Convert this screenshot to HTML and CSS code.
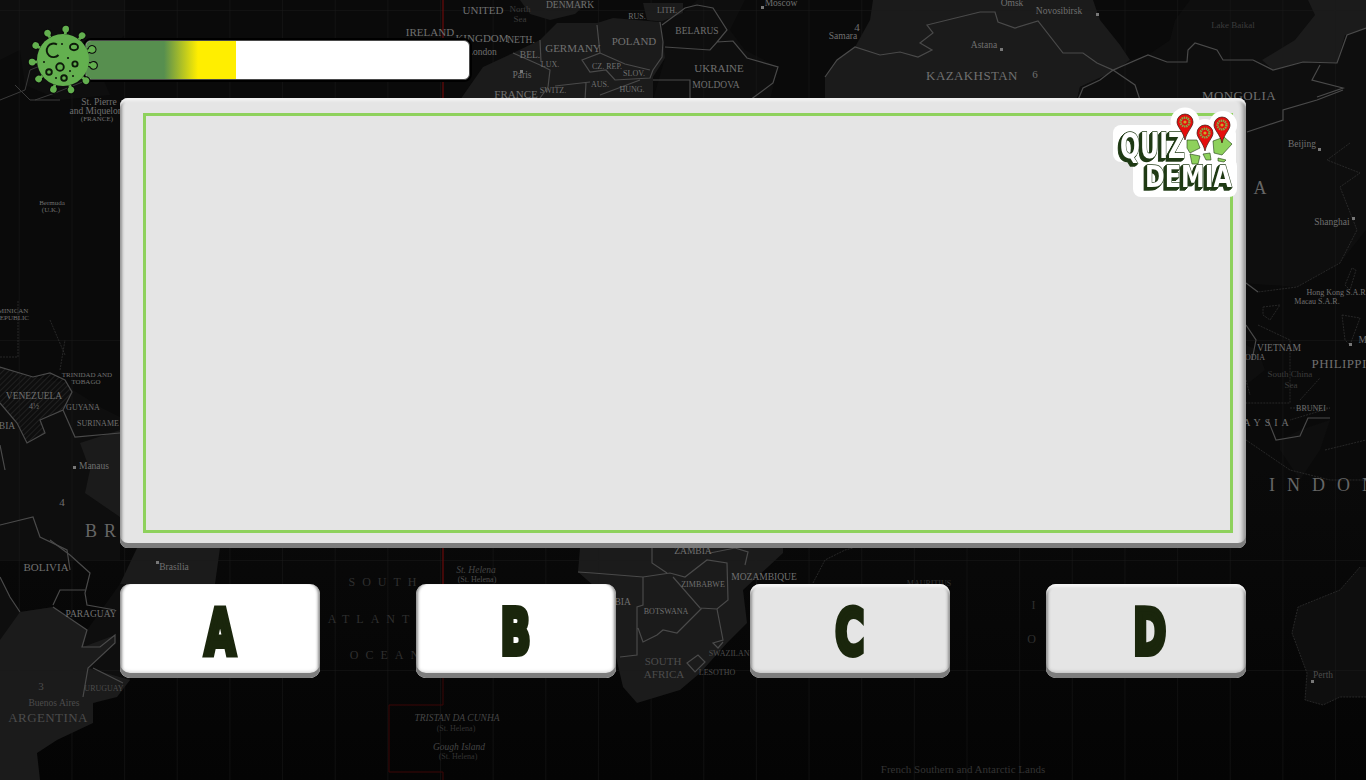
FILE: index.html
```html
<!DOCTYPE html>
<html lang="en">
<head>
    <meta charset="utf-8">
    <meta name="viewport" content="width=device-width, initial-scale=1.0">
    <title>Quizdemia</title>
    <link rel="stylesheet" href="styles.css">
</head>

<body>
    <!-- world map behind the game -->
    <svg class="map" viewBox="0 0 1366 780" aria-hidden="true">
        <defs>
            <pattern id="grid" x="18.8" y="10" width="52.65" height="110" patternUnits="userSpaceOnUse">
                <path class="gridline" d="M0 0V110M0 0H52.65"/>
            </pattern>
            <pattern id="hatch" width="4" height="4" patternUnits="userSpaceOnUse" patternTransform="rotate(45)">
                <path class="hatchline" d="M0 0V4"/>
            </pattern>
        </defs>

        <!-- land -->
        <path class="land" d="M460 100L483 67 513 53 540 40 557 23 597 23 613 18 660 22 665 47 665 58 653 77 653 100Z"/>
        <path class="land" d="M643 3H683V13L673 23 647 20Z"/>
        <path class="land" d="M520 0H590L575 14 550 20 530 14Z"/>
        <path class="land-dark" d="M660 22L683 13 697 0H745L730 30 745 50 778 67 770 100H653L665 58Z"/>
        <path class="land" d="M825 77L837 60 855 47 870 20 873 0H1093L1100 20 1120 45 1130 60 1117 70 1080 87 1077 100H825Z"/>
        <path class="land-dark" d="M1077 100L1080 87 1117 70 1130 60 1148 55 1170 40 1175 20 1190 0H1366V230L1340 263 1297 287 1240 283V100Z"/>
        <path class="land" d="M1262 60L1295 40 1315 15 1308 0H1366V28L1345 35 1337 63 1303 62 1273 70Z"/>
        <path class="land-dark" d="M0 0H125V35L95 60 110 95 60 100 25 85 20 50 0 60Z"/>
        <path class="land-dark" d="M0 367L33 377 67 383 73 390 100 407 120 417V560H0Z"/>
        <path class="land" d="M80 443L120 430V517L85 493 90 470Z"/>
        <path class="land-dark" d="M0 577L10 597 20 612 53 607 87 630 120 584H132L130 680 100 700 60 720 0 650Z"/>
        <path class="land" d="M0 640L20 612 53 607 87 630 83 647 115 635 115 643 88 668 130 680 117 697 93 703 93 723 57 740 37 753 40 780H0Z"/>
        <path class="land" d="M137 548H220L215 584H120Z"/>
        <path class="land" d="M580 548L578 572 610 600 616 620 616 657 623 687 637 703 680 690 700 673 727 643 747 623 743 590 783 553V548Z"/>
        <path class="land-dark" d="M1360 567L1340 590 1298 607 1292 633 1307 673 1305 700 1323 705 1340 697H1366V567Z"/>
        <path class="land-dark" d="M1246 345L1258 350 1265 370 1246 385ZM1280 440L1300 430 1330 420 1320 450 1300 480 1280 450Z"/>
        <path fill="url(#hatch)" d="M0 367L33 377 50 373 65 380 72 392 63 410 40 420 45 433 27 443 17 423 0 403Z"/>

        <rect width="1366" height="780" fill="url(#grid)"/>

        <!-- time zone line -->
        <path class="zone" d="M443 0V100M443 545V600"/>
        <path class="zone-dim" d="M443 600V705H389V772H443V780"/>

        <!-- borders -->
        <path class="border" d="M513 53L540 65 550 70 548 87 540 98M540 40L541 62M597 25L600 53 582 60 590 72 606 70 615 80 650 78 653 70M600 53L625 64 650 70M660 22L663 42 662 57 653 70M665 47L710 50 717 42 733 41 747 58 778 67 773 83 750 100M662 25L685 8 697 5 713 8 727 30 717 42M653 80L690 80 690 100M586 83L585 100M555 86L590 82M600 95L640 80"/>
        <path class="border" d="M825 77L837 60 855 47 880 55 900 52 918 57 932 50 920 43 933 33 927 25 980 12 995 12 998 22 1015 28 1038 21 1063 53 1083 53 1097 63 1113 70 1148 55 1167 62 1187 62 1188 50 1195 43 1217 50 1223 60 1253 60 1273 70 1303 62 1337 63 1347 35 1366 28M1113 70L1100 80 1083 88 1078 100M1113 70L1135 85 1140 100M1320 65L1312 80 1343 88 1317 97"/>
        <path class="border" d="M1247 132L1283 120 1283 110 1317 100 1343 90M1246 283L1258 292M1246 325L1256 340 1252 360M1268 420L1276 440 1300 436 1308 418 1330 418"/>
        <path class="border" d="M578 572L593 573 643 577 670 573 685 577 707 560 727 563 728 600 717 609 700 608 673 577M643 577V605L637 607V655L620 657M638 628L643 642 657 635 663 630 677 633 702 608M717 609L723 640 713 643 718 648 723 642M687 663L698 655 705 662 695 672ZM652 548V563L667 573M710 553L735 548 748 552 745 565"/>
        <path class="border" d="M50 540L70 555 90 573 85 593 87 605 115 610M53 605L60 590 85 590M20 612L10 597 0 577M53 607L87 630 82 647 100 647 115 635 115 643 88 668 83 697M93 668L123 683"/>
        <path class="border" d="M0 367L33 377 50 373 65 380 72 392 63 410 40 420 45 433 27 443 17 423 0 403M72 392L63 410 75 437 120 433M0 525L33 517 40 537 67 550 70 570M0 445L5 470"/>
        <path class="border-thin" d="M0 100L25 90 30 70 55 60 100 75M15 85L30 100 60 100M35 100L55 93 100 75"/>

        <!-- thin coast lines -->
        <path class="coast" d="M1350 143L1327 160 1360 173 1340 187 1357 230 1340 263 1297 287 1258 292M1352 268L1345 285 1350 290 1356 270ZM1263 307L1280 305 1270 320 1263 315ZM1258 325L1290 340 1290 403H1246M1342 315L1360 318 1350 345 1345 340ZM1300 400L1320 378M1246 440L1290 470 1330 480 1366 480M1290 408L1330 408 1290 420M1325 450L1366 440M1246 380L1250 395"/>
        <path class="coast" d="M1360 567L1340 590 1298 607 1292 633 1307 673 1305 700 1323 705 1340 697H1366M813 583L825 560 845 550 853 548M0 357H18V300M50 320L65 355M60 370L65 340"/>

        <!-- labels -->
        <text class="lbl" x="483" y="14">UNITED</text>
        <text class="lbl" x="430" y="36">IRELAND</text>
        <text class="lbl" x="482" y="42">KINGDOM</text>
        <text class="lbl-sm" x="482" y="55">London</text>
        <text class="lbl-dim" x="520" y="12">North</text>
        <text class="lbl-dim" x="520" y="14" dy="8">Sea</text>
        <text class="lbl-sm" x="570" y="8">DENMARK</text>
        <text class="lbl-sm" x="521" y="43">NETH.</text>
        <text class="lbl-sm" x="530" y="58">BEL.</text>
        <text class="lbl-xs" x="550" y="67">LUX.</text>
        <text class="lbl-sm" x="522" y="78">Paris</text>
        <text class="lbl" x="516" y="98">FRANCE</text>
        <text class="lbl" x="573" y="52">GERMANY</text>
        <text class="lbl" x="634" y="45">POLAND</text>
        <text class="lbl-xs" x="607" y="69">CZ. REP.</text>
        <text class="lbl-xs" x="634" y="76">SLOV.</text>
        <text class="lbl-xs" x="600" y="87">AUS.</text>
        <text class="lbl-xs" x="632" y="92">HUNG.</text>
        <text class="lbl-xs" x="553" y="93">SWITZ.</text>
        <text class="lbl-xs" x="637" y="19">RUS.</text>
        <text class="lbl-xs" x="667" y="13">LITH.</text>
        <text class="lbl-sm" x="697" y="34">BELARUS</text>
        <text class="lbl" x="719" y="72">UKRAINE</text>
        <text class="lbl-sm" x="716" y="88">MOLDOVA</text>
        <text class="lbl-sm" x="781" y="6">Moscow</text>
        <text class="lbl-sm" x="843" y="39">Samara</text>
        <text class="lbl" x="857" y="31">4</text>
        <text class="lbl-sm" x="1012" y="6">Omsk</text>
        <text class="lbl-sm" x="1059" y="14">Novosibirsk</text>
        <text class="lbl-sm" x="984" y="48">Astana</text>
        <text class="lbl-big" x="972" y="80">KAZAKHSTAN</text>
        <text class="lbl" x="1035" y="78">6</text>
        <text class="lbl-dim" x="1233" y="28">Lake Baikal</text>
        <text class="lbl-big" x="1239" y="100">MONGOLIA</text>
        <text class="lbl-sm" x="1302" y="147">Beijing</text>
        <text class="lbl-huge" x="1260" y="194">A</text>
        <text class="lbl-sm" x="1332" y="225">Shanghai</text>
        <text class="lbl-xs" x="1337" y="295">Hong Kong S.A.R.</text>
        <text class="lbl-xs" x="1317" y="304">Macau S.A.R.</text>
        <text class="lbl-sm" x="1279" y="351">VIETNAM</text>
        <text class="lbl-xs" x="1255" y="360">ODIA</text>
        <text class="lbl-big" x="1352" y="368">PHILIPPINES</text>
        <text class="lbl-sm" x="1372" y="343">Manila</text>
        <text class="lbl-dim" x="1290" y="377">South China</text>
        <text class="lbl-dim" x="1291" y="388">Sea</text>
        <text class="lbl-xs" x="1311" y="411">BRUNEI</text>
        <text class="lbl-spaced" x="1268" y="426">AYSIA</text>
        <text class="lbl-huge lbl-wide" x="1372" y="491">INDONESIA</text>
        <text class="lbl-sm" x="99" y="105">St. Pierre</text>
        <text class="lbl-sm" x="96" y="114">and Miquelon</text>
        <text class="lbl-xxs" x="97" y="121">(FRANCE)</text>
        <text class="lbl-xxs" x="52" y="205">Bermuda</text>
        <text class="lbl-xxs" x="51" y="212">(U.K.)</text>
        <text class="lbl-xxs" x="8" y="313">DOMINICAN</text>
        <text class="lbl-xxs" x="12" y="320">REPUBLIC</text>
        <text class="lbl-xxs" x="87" y="377">TRINIDAD AND</text>
        <text class="lbl-xxs" x="86" y="384">TOBAGO</text>
        <text class="lbl-sm" x="34" y="399">VENEZUELA</text>
        <text class="lbl-xs" x="34" y="409">4½</text>
        <text class="lbl-xs" x="83" y="410">GUYANA</text>
        <text class="lbl-xs" x="98" y="426">SURINAME</text>
        <text class="lbl-sm" x="7" y="429">BIA</text>
        <text class="lbl-sm" x="94" y="469">Manaus</text>
        <text class="lbl" x="62" y="506">4</text>
        <text class="lbl-huge lbl-wide-sm" x="104" y="537">BR</text>
        <text class="lbl" x="46" y="571">BOLIVIA</text>
        <text class="lbl-sm" x="91" y="617">PARAGUAY</text>
        <text class="lbl-xs lbl-faint" x="104" y="691">URUGUAY</text>
        <text class="lbl lbl-faint" x="41" y="690">3</text>
        <text class="lbl-sm lbl-faint" x="54" y="706">Buenos Aires</text>
        <text class="lbl-big lbl-faint" x="48" y="722">ARGENTINA</text>
        <text class="lbl-sm" x="174" y="570">Brasília</text>
        <text class="lbl-ocean" x="386" y="586">SOUTH</text>
        <text class="lbl-ocean" x="385" y="623">ATLANTIC</text>
        <text class="lbl-ocean" x="388" y="659">OCEAN</text>
        <text class="lbl-note" x="476" y="573">St. Helena</text>
        <text class="lbl-xs lbl-faint" x="477" y="582">(St. Helena)</text>
        <text class="lbl-note" x="457" y="721">TRISTAN DA CUNHA</text>
        <text class="lbl-xs lbl-dark" x="456" y="731">(St. Helena)</text>
        <text class="lbl-note" x="459" y="750">Gough Island</text>
        <text class="lbl-xs lbl-dark" x="458" y="759">(St. Helena)</text>
        <text class="lbl-sm" x="693" y="554">ZAMBIA</text>
        <text class="lbl-sm" x="764" y="580">MOZAMBIQUE</text>
        <text class="lbl-xs" x="703" y="587">ZIMBABWE</text>
        <text class="lbl-xs" x="666" y="614">BOTSWANA</text>
        <text class="lbl-sm" x="610" y="605">NAMIBIA</text>
        <text class="lbl lbl-faint" x="663" y="665">SOUTH</text>
        <text class="lbl lbl-faint" x="664" y="678">AFRICA</text>
        <text class="lbl-xs lbl-faint" x="732" y="656">SWAZILAND</text>
        <text class="lbl-xs lbl-faint" x="717" y="675">LESOTHO</text>
        <text class="lbl-xs lbl-dark" x="929" y="586">MAURITIUS</text>
        <text class="lbl-ocean" x="1037" y="609">I</text>
        <text class="lbl-ocean" x="1035" y="643">O</text>
        <text class="lbl-sm lbl-faint" x="1323" y="678">Perth</text>
        <text class="lbl lbl-dark" x="963" y="773">French Southern and Antarctic Lands</text>

        <!-- city dots -->
        <path class="dot" d="M520 70h3v3h-3zM761 6h3v3h-3zM1096 13h3v3h-3zM1000 48h3v3h-3zM1318 148h3v3h-3zM1352 217h3v3h-3zM1349 343h3v3h-3zM73 466h3v3h-3zM156 561h3v3h-3zM1311 680h3v3h-3z"/>
    </svg>

    <header class="hud">
        <svg class="virus" viewBox="0 0 76 76" role="img" aria-label="Virus">
            <defs>
                <g id="spike">
                    <path d="M38 12V8"/>
                    <circle cx="38" cy="7" r="1.9"/>
                </g>
            </defs>
            <g class="spikes-out">
                <use href="#spike" transform="rotate(5 38 38)"/>
                <use href="#spike" transform="rotate(38 38 38)"/>
                <use href="#spike" transform="rotate(70 38 38)"/>
                <use href="#spike" transform="rotate(100 38 38)"/>
                <use href="#spike" transform="rotate(132 38 38)"/>
                <use href="#spike" transform="rotate(165 38 38)"/>
                <use href="#spike" transform="rotate(198 38 38)"/>
                <use href="#spike" transform="rotate(232 38 38)"/>
                <use href="#spike" transform="rotate(266 38 38)"/>
                <use href="#spike" transform="rotate(298 38 38)"/>
                <use href="#spike" transform="rotate(330 38 38)"/>
            </g>
            <g class="spikes">
                <use href="#spike" transform="rotate(5 38 38)"/>
                <use href="#spike" transform="rotate(38 38 38)"/>
                <use href="#spike" transform="rotate(70 38 38)"/>
                <use href="#spike" transform="rotate(100 38 38)"/>
                <use href="#spike" transform="rotate(132 38 38)"/>
                <use href="#spike" transform="rotate(165 38 38)"/>
                <use href="#spike" transform="rotate(198 38 38)"/>
                <use href="#spike" transform="rotate(232 38 38)"/>
                <use href="#spike" transform="rotate(266 38 38)"/>
                <use href="#spike" transform="rotate(298 38 38)"/>
                <use href="#spike" transform="rotate(330 38 38)"/>
            </g>
            <circle class="virus-body" cx="38" cy="38" r="26"/>
            <g class="virus-holes">
                <path d="M32 22.5A6.8 6.8 0 1 0 33.5 33"/>
                <ellipse cx="49" cy="25" rx="4" ry="3.2"/>
                <circle cx="35" cy="45" r="3.8"/>
                <circle cx="50" cy="42" r="2.6"/>
                <circle cx="24" cy="50" r="2.8"/>
                <circle cx="39" cy="56" r="2.8"/>
            </g>
            <g class="virus-dots">
                <circle cx="43" cy="36" r="1.1"/>
                <circle cx="37" cy="22" r="1"/>
                <circle cx="19" cy="40" r="1"/>
                <circle cx="31" cy="56" r="1"/>
                <circle cx="48" cy="54" r="1"/>
                <circle cx="45" cy="49" r="1"/>
            </g>
        </svg>
        <div class="bar">
            <div class="bar-fill"></div>
        </div>
    </header>

    <main class="game">
        <section class="panel">
            <div class="question"></div>
            <svg class="logo" viewBox="0 0 135 96" role="img" aria-label="Quizdemia">
                <defs>
                    <g id="pin">
                        <path class="pin-red" d="M-8 0A8 8 0 1 1 8 0C8 5 2 9 0 18 -2 9 -8 5 -8 0Z"/>
                        <circle class="pin-ring" r="4.4"/>
                        <circle class="pin-core" r="1.6"/>
                    </g>
                </defs>
                <g class="sticker">
                    <rect x="3" y="21" width="84" height="37" rx="8"/>
                    <rect x="23" y="54" width="104" height="39" rx="8"/>
                    <rect x="76" y="24" width="50" height="44" rx="6"/>
                    <circle cx="75" cy="18" r="14.5"/>
                    <circle cx="95" cy="29" r="14"/>
                    <circle cx="113" cy="21" r="14"/>
                </g>
                <g class="lands">
                    <path d="M77 36L87 36 90 44 80 49 77 44ZM80 50L90 52 88 60 82 60ZM93 50L100 49 101 56 96 56ZM103 37L114 33 122 40 112 51 104 49ZM108 54L116 56 114 58 108 57Z"/>
                </g>
                <text class="logo-text" x="10" y="54" textLength="65" lengthAdjust="spacingAndGlyphs">QUIZ</text>
                <text class="logo-text logo-text-sm" x="35" y="83" textLength="87" lengthAdjust="spacingAndGlyphs">DEMIA</text>
                <use href="#pin" x="75" y="18"/>
                <use href="#pin" x="95" y="29"/>
                <use href="#pin" x="112" y="21"/>
            </svg>
        </section>

        <div class="answers">
            <div class="answer-group">
                <button class="answer"><span>A</span></button>
                <button class="answer"><span>B</span></button>
            </div>
            <div class="answer-group">
                <button class="answer answer-off"><span>C</span></button>
                <button class="answer answer-off answer-d"><span>D</span></button>
            </div>
        </div>
    </main>
</body></html>
```

FILE: styles.css
```css
html, body {
    margin: 0;
    height: 100%;
}

body {
    background: linear-gradient(#0a0a0a, #0a0a0a 60%, #040404);
    overflow: hidden;
}

/* map */
.map {
    position: absolute;
    top: 0;
    left: 0;
    width: 1366px;
    height: 780px;
}

.map text {
    font-family: "Liberation Serif", serif;
    text-anchor: middle;
    fill: #707070;
}

.gridline {
    fill: none;
    stroke: #1a1a1a;
    stroke-width: 1;
}

.hatchline {
    stroke: #242424;
    stroke-width: 1.6;
}

.land {
    fill: #1b1b1b;
}

.land-dark {
    fill: #0e0e0e;
}

.zone {
    fill: none;
    stroke: #6a0a0a;
    stroke-width: 1.2;
}

.zone-dim {
    fill: none;
    stroke: #3c0606;
    stroke-width: 1;
}

.border {
    fill: none;
    stroke: #4a4a4a;
    stroke-width: 1.2;
}

.border-thin {
    fill: none;
    stroke: #3a3a3a;
    stroke-width: 1;
}

.coast {
    fill: none;
    stroke: #333;
    stroke-width: .7;
    stroke-dasharray: 2 1;
}

.dot {
    fill: #777;
}

.map .lbl { font-size: 11px; }
.map .lbl-sm { font-size: 9.5px; }
.map .lbl-xs { font-size: 8px; }
.map .lbl-xxs { font-size: 7px; }
.map .lbl-big { font-size: 13px; letter-spacing: .4px; }
.map .lbl-huge { font-size: 18px; fill: #666; }
.map .lbl-wide { letter-spacing: 12px; }
.map .lbl-wide-sm { letter-spacing: 7px; }
.map .lbl-spaced { font-size: 10px; letter-spacing: 4px; }
.map .lbl-dim { font-size: 9px; fill: #3c3c3c; }
.map .lbl-faint { fill: #4c4c4c; }
.map .lbl-dark { fill: #333; }
.map .lbl-ocean { font-size: 12px; letter-spacing: 7px; fill: #2f2f2f; }
.map .lbl-note { font-size: 9.5px; font-style: italic; fill: #444; }

/* top bar with virus */
.hud {
    position: relative;
    display: flex;
    align-items: flex-start;
    height: 76px;
    padding: 22px 0 0 25px;
}

.virus {
    width: 76px;
    height: 76px;
    z-index: 1;
    flex: none;
}

.spikes-out {
    fill: #0b0b0b;
    stroke: #0b0b0b;
    stroke-width: 5;
}

.spikes {
    fill: #63b04f;
    stroke: #63b04f;
    stroke-width: 2.8;
}

.virus-body {
    fill: #63b04f;
}

.virus-holes {
    fill: none;
    stroke: #0d1a0a;
    stroke-width: 1.9;
}

.virus-dots {
    fill: #0d1a0a;
}

.bar {
    width: 383px;
    height: 38px;
    margin: 18px 0 0 -16px;
    background: #fff;
    border: 1px solid #4a4a4a;
    border-radius: 6px;
    box-shadow: 0 0 0 2px #000;
    overflow: hidden;
}

.bar-fill {
    width: 150px;
    height: 100%;
    background: linear-gradient(90deg, #578f4f 0, #578f4f 78px, #ffee00 112px, #ffee00 100%);
}

/* panel and answers */
.game {
    position: relative;
    width: 1126px;
    margin-left: 120px;
}

.panel {
    position: relative;
    box-sizing: border-box;
    height: 450px;
    padding: 15px 13px 15px 23px;
    background: #e5e5e5;
    border-radius: 8px;
    box-shadow: inset 0 -5px 0 #7d7d7d, inset 0 4px 2px -1px #f1f1f1, inset -5px 0 4px -2px #8c8c8c, inset 4px 0 3px -2px #8c8c8c;
}

.question {
    box-sizing: border-box;
    height: 420px;
    border: 3px solid #8ed15c;
}

.logo {
    position: absolute;
    top: 6px;
    left: 990px;
    width: 135px;
    height: 96px;
}

.sticker {
    fill: #fff;
}

.lands path {
    fill: #8ed15c;
    stroke: #1f3a14;
    stroke-width: .6;
    stroke-linejoin: round;
}

.logo-text {
    font-family: "DejaVu Sans", sans-serif;
    font-weight: bold;
    font-size: 36px;
    fill: #fff;
    stroke: #1f3a14;
    stroke-width: 1.4px;
    stroke-linejoin: miter;
    paint-order: stroke;
    filter: drop-shadow(-1px 1px 0 #1f3a14) drop-shadow(-1px 1px 0 #1f3a14) drop-shadow(-1px 1px 0 #1f3a14);
}

.logo-text-sm {
    font-size: 30px;
}

.pin-red {
    fill: #e60d0d;
    stroke: #3a1a10;
    stroke-width: .7;
}

.pin-ring {
    fill: none;
    stroke: #7fb44a;
    stroke-width: 2.4;
    stroke-dasharray: 1.4 .7;
}

.pin-core {
    fill: #c9a62a;
}

.answers {
    display: flex;
    justify-content: space-between;
    margin-top: 36px;
}

.answer-group {
    display: flex;
    gap: 96px;
}

.answer {
    width: 200px;
    height: 94px;
    padding: 4px 0 0;
    background: #fff;
    border: 0;
    border-radius: 10px;
    box-shadow: inset 0 -5px 0 #7d7d7d, inset 0 -9px 4px -4px #bbb, inset -4px 0 3px -2px #8c8c8c, inset 4px 0 3px -2px #8c8c8c;
    font-family: "DejaVu Sans", sans-serif;
    font-weight: bold;
    font-size: 62px;
    line-height: 1;
    color: #1a260c;
}

.answer span {
    display: inline-block;
    transform: scaleX(.64);
    -webkit-text-stroke: 6px #1a260c;
}

.answer-off {
    background: #e5e5e5;
    box-shadow: inset 0 -5px 0 #7d7d7d, inset 0 -9px 4px -4px #aaa, inset 0 4px 2px -1px #f4f4f4, inset -4px 0 3px -2px #8c8c8c, inset 4px 0 3px -2px #8c8c8c;
}

.answer-d {
    padding-left: 8px;
}
```
